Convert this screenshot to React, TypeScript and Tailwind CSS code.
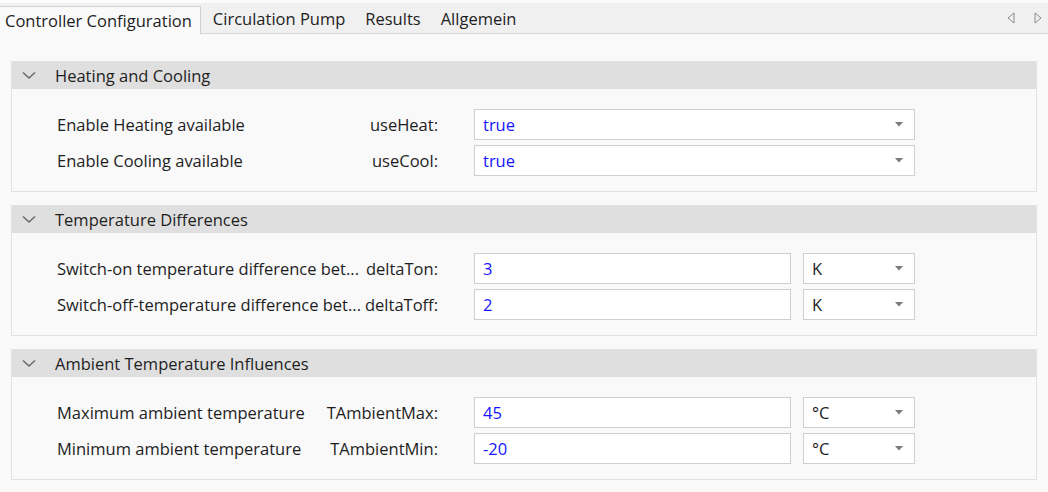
import React from "react";

const Chevron = () => (
  <svg width="14" height="9" viewBox="0 0 14 9" className="shrink-0">
    <path d="M1 1.5 L7 7 L13 1.5" fill="none" stroke="#6b6b6b" strokeWidth="1.6" />
  </svg>
);

const Caret = () => (
  <svg width="8" height="5" viewBox="0 0 8 5" className="shrink-0">
    <path d="M0 0 H8 L4 4.5 Z" fill="#7a7a7a" />
  </svg>
);

type Row = {
  desc: string;
  name: string;
  value: string;
  unit?: string;
  gap?: boolean;
};

const Select = ({ value, blue, className }: { value: string; blue?: boolean; className: string }) => (
  <div
    className={`${className} h-[31px] bg-white border border-[#cfcfcf] flex items-center pl-[8px] pr-[11px]`}
  >
    <span className={`flex-1 ${blue ? "text-[#1616ff]" : "text-[#1e1e1e]"}`}>{value}</span>
    <Caret />
  </div>
);

const Section = ({ title, rows, bool }: { title: string; rows: Row[]; bool?: boolean }) => (
  <div className="mx-[11px] border border-[#e2e2e2] bg-[#f9f9f9]">
    <div className="h-[27px] bg-[#dfdfdf] flex items-center pl-[10px] gap-[19px]">
      <Chevron />
      <span className="text-[#1e1e1e]">{title}</span>
    </div>
    <div className="pt-[20px] pb-[15px] flex flex-col gap-[5px]">
      {rows.map((r) => (
        <div key={r.name} className="flex items-center h-[31px]">
          <div className="ml-[45px] w-[381px] flex items-center whitespace-nowrap">
            <span className="flex-1 min-w-0 overflow-hidden">{r.desc}</span>
            <span className={`shrink-0 ${r.gap ? "ml-[5px]" : ""}`}>{r.name}</span>
          </div>
          <div className="ml-[36px] flex items-center gap-[12px]">
            {bool ? (
              <Select value={r.value} blue className="w-[441px]" />
            ) : (
              <>
                <div className="w-[317px] h-[31px] bg-white border border-[#cfcfcf] flex items-center pl-[8px] text-[#1616ff]">
                  {r.value}
                </div>
                <Select value={r.unit || ""} className="w-[112px]" />
              </>
            )}
          </div>
        </div>
      ))}
    </div>
  </div>
);

export default function App() {
  return (
    <div
      className="w-[1048px] h-[492px] overflow-hidden bg-[#f9f9f9] text-[16.5px] text-[#1e1e1e] leading-[1.3]"
      style={{ fontFamily: "'Open Sans', 'Noto Sans', sans-serif" }}
    >
      <div className="h-[3px] bg-[#fbfbfb]" />
      <div className="h-[31px] bg-[#f0f0f0] border-b border-[#d6d6d6] flex items-end relative">
        <div className="h-[28px] -mb-px bg-[#fafafa] border-t border-r border-[#d0d0d0] flex items-center pl-[5px] pr-[8px]">
          Controller Configuration
        </div>
        <div className="h-[28px] flex items-center pl-[12px] pr-[10px]">Circulation Pump</div>
        <div className="h-[28px] flex items-center px-[10px]">Results</div>
        <div className="h-[28px] flex items-center px-[10px]">Allgemein</div>
        <div className="flex-1" />
        <div className="h-[28px] flex items-center gap-[19px] pr-[6px] pb-[2px]">
          <svg width="8" height="12" viewBox="0 0 8 12">
            <path d="M7 1 L1 6 L7 11 Z" fill="none" stroke="#8a8a8a" strokeWidth="1" />
          </svg>
          <svg width="8" height="12" viewBox="0 0 8 12">
            <path d="M1 1 L7 6 L1 11 Z" fill="none" stroke="#8a8a8a" strokeWidth="1" />
          </svg>
        </div>
      </div>
      <div className="pt-[27px] flex flex-col gap-[13px]">
        <Section
          title="Heating and Cooling"
          bool
          rows={[
            { desc: "Enable Heating available", name: "useHeat:", value: "true" },
            { desc: "Enable Cooling available", name: "useCool:", value: "true" },
          ]}
        />
        <Section
          title="Temperature Differences"
          rows={[
            { desc: "Switch-on temperature difference bet...", name: "deltaTon:", value: "3", unit: "K", gap: true },
            { desc: "Switch-off-temperature difference bet...", name: "deltaToff:", value: "2", unit: "K" },
          ]}
        />
        <Section
          title="Ambient Temperature Influences"
          rows={[
            { desc: "Maximum ambient temperature", name: "TAmbientMax:", value: "45", unit: "°C" },
            { desc: "Minimum ambient temperature", name: "TAmbientMin:", value: "-20", unit: "°C" },
          ]}
        />
      </div>
    </div>
  );
}
